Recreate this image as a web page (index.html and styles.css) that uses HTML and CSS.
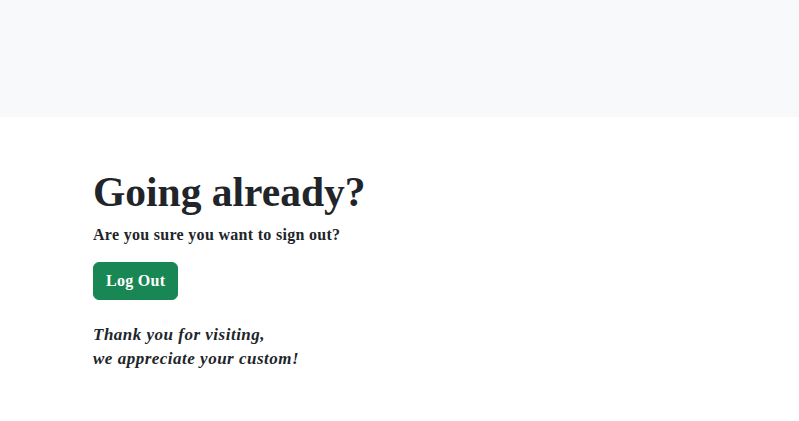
FILE: index.html
```html
<!DOCTYPE html>
<html lang="en">
<head>
<meta charset="utf-8">
<title>Log Out</title>
<link rel="stylesheet" href="styles.css">
</head>
<body>
<header class="topbar"></header>
<main class="content">
  <h1 class="title">Going already?</h1>
  <p class="question">Are you sure you want to sign out?</p>
  <form class="logout-form">
    <button type="button" class="btn-logout">Log Out</button>
  </form>
  <p class="thanks">Thank you for visiting,<br>we appreciate your custom!</p>
</main>
</body>
</html>
```

FILE: styles.css
```css
* { box-sizing: border-box; }
html, body { margin: 0; padding: 0; }
body {
  background: #ffffff;
  color: #212529;
  font-family: "Liberation Serif", "DejaVu Serif", serif;
  font-size: 16px;
  line-height: 1.5;
}
.topbar {
  height: 117px;
  background: #f8f9fa;
}
.content {
  padding: 51px 0 0 93px;
}
.title {
  margin: 0 0 5px;
  font-size: 41.5px;
  line-height: 1.2;
  font-weight: 700;
}
.question {
  margin: 0 0 15px;
  font-weight: 700;
  font-size: 16px;
  letter-spacing: 0.3px;
}
.logout-form { margin: 0; }
.btn-logout {
  display: inline-block;
  font-family: inherit;
  font-size: 16px;
  font-weight: 700;
  line-height: 24px;
  letter-spacing: 0.3px;
  color: #ffffff;
  background: #198754;
  border: 1px solid #198754;
  border-radius: 6px;
  padding: 6px 12px;
  cursor: pointer;
}
.thanks {
  margin: 23px 0 0;
  font-style: italic;
  font-weight: 700;
  font-size: 17px;
  line-height: 24px;
  letter-spacing: 0.5px;
}
```
